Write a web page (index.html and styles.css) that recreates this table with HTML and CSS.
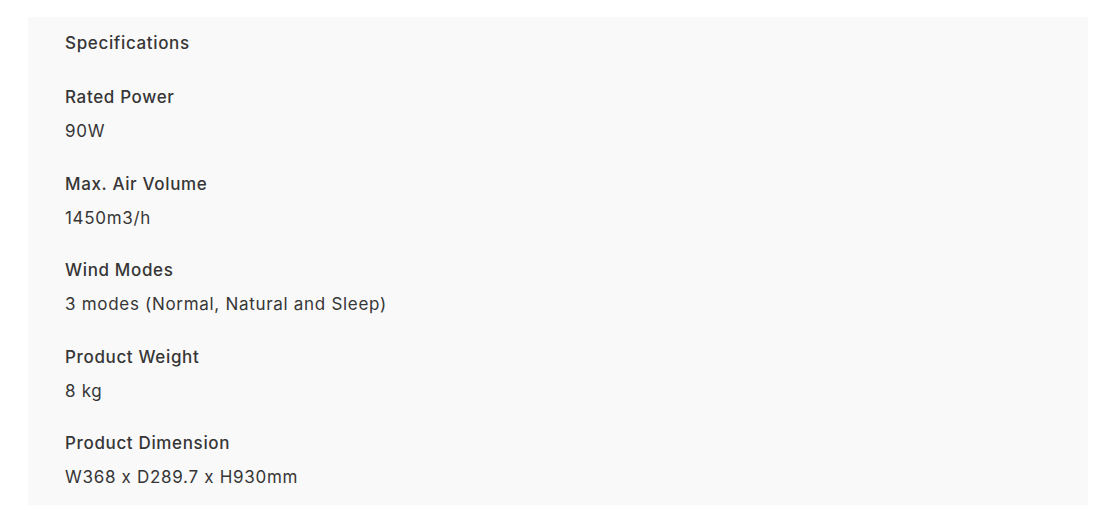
FILE: index.html
```html
<!DOCTYPE html>
<html>
<head>
<meta charset="utf-8">
<link rel="stylesheet" href="styles.css">
</head>
<body>
<section class="specs">
  <h2 class="specs-title">Specifications</h2>
  <dl class="specs-list">
    <div class="spec">
      <dt class="spec-label">Rated Power</dt>
      <dd class="spec-value">90W</dd>
    </div>
    <div class="spec">
      <dt class="spec-label">Max. Air Volume</dt>
      <dd class="spec-value">1450m3/h</dd>
    </div>
    <div class="spec">
      <dt class="spec-label">Wind Modes</dt>
      <dd class="spec-value">3 modes (Normal, Natural and Sleep)</dd>
    </div>
    <div class="spec">
      <dt class="spec-label">Product Weight</dt>
      <dd class="spec-value">8 kg</dd>
    </div>
    <div class="spec">
      <dt class="spec-label">Product Dimension</dt>
      <dd class="spec-value">W368 x D289.7 x H930mm</dd>
    </div>
  </dl>
</section>
</body>
</html>
```
FILE: styles.css
```css
html, body {
  margin: 0;
  padding: 0;
  background: #ffffff;
}
body {
  padding: 17px 26px 27px 28px;
  font-family: Inter, "Liberation Sans", sans-serif;
  color: #363636;
}
.specs {
  background: #f9f9f9;
  height: 488px;
  box-sizing: border-box;
  padding: 14px 37px 16px 37px;
}
.specs-title {
  margin: 0;
  font-size: 17px;
  letter-spacing: 0.65px;
  line-height: 24px;
  font-weight: 500;
}
.specs-list {
  margin: 30px 0 0 0;
  display: flex;
  flex-direction: column;
  gap: 28.5px;
}
.spec {
  display: flex;
  flex-direction: column;
  gap: 10px;
}
.spec-label {
  font-size: 17px;
  letter-spacing: 0.65px;
  line-height: 24px;
  font-weight: 500;
}
.spec-value {
  margin: 0;
  font-size: 17px;
  letter-spacing: 0.7px;
  line-height: 24px;
  font-weight: 400;
}
```
